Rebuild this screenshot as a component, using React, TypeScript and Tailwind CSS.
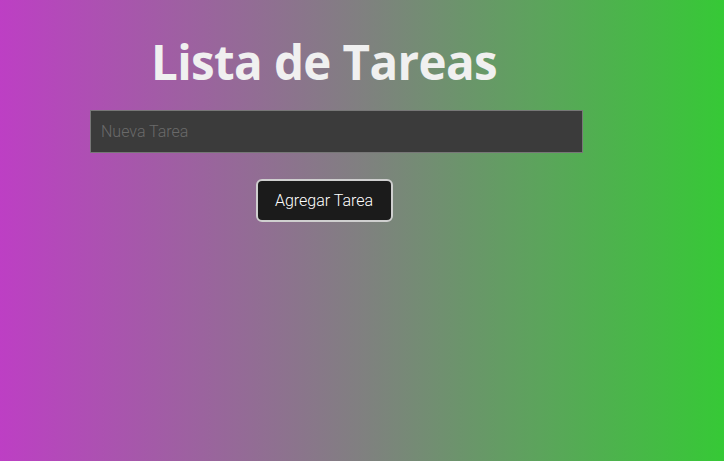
export default function App() {
  return (
    <div className="min-h-[461px] w-full bg-[linear-gradient(to_right,#bd3fc4,#808080,#36c936)] font-['Open_Sans',sans-serif]">
      <div className="w-[648px] flex flex-col items-center pt-[30px]">
        <h1 className="text-[47.5px] leading-[64px] font-bold text-[#f0f0f0] font-['Open_Sans',sans-serif] tracking-[-0.6px]">
          Lista de Tareas
        </h1>
      </div>
      <div className="pl-[90px] pt-[16px]">
        <input
          placeholder="Nueva Tarea"
          className="w-[493px] h-[43px] bg-[#3b3b3b] border border-[#777] px-[10px] text-[16px] text-white placeholder:text-[#6a6a6a] font-['Roboto',sans-serif] font-light outline-none"
        />
      </div>
      <div className="w-[648px] flex justify-center pt-[26px]">
        <button className="w-[137px] h-[43px] bg-[#1b1b1b] border-2 border-[#cfcfcf] rounded-[6px] text-white text-[16px] font-['Roboto',sans-serif] font-light">
          Agregar Tarea
        </button>
      </div>
    </div>
  );
}
